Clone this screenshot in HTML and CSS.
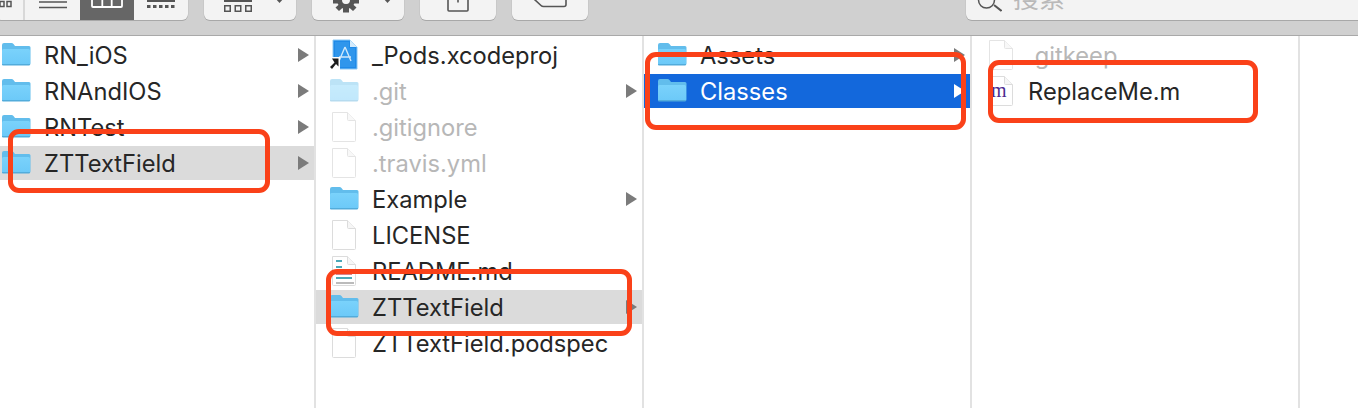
FILE: index.html
```html
<!DOCTYPE html>
<html lang="zh">
<head>
<meta charset="utf-8">
<title>Finder</title>
<link rel="stylesheet" href="styles.css">
</head>
<body>
<svg class="defs" width="0" height="0" aria-hidden="true">
  <defs>
    <linearGradient id="fg" x1="0" y1="0" x2="0" y2="1"><stop offset="0" stop-color="#7ad2fb"/><stop offset="1" stop-color="#6cc9f8"/></linearGradient>
    <symbol id="folder" viewBox="0 0 30 26">
      <path d="M1 21.500V3q0-2 2-2h7.500q1.200 0 2 1l1.500 2h14q1.500 0 1.500 1.500V21.500q0 1.500-1.500 1.500H2.500Q1 23 1 21.500z" fill="#62bdec"/>
      <path d="M1 8.500q0-1.500 1.500-1.500h25q1.500 0 1.500 1.500v13q0 1-1 1H2q-1 0-1-1z" fill="url(#fg)"/>
      <path d="M1 22h28v.5q0 1-1 1H2q-1 0-1-1z" fill="#52acdb"/>
    </symbol>
    <symbol id="file" viewBox="0 0 26 32">
      <path d="M1.500 1.500h15l8 8v20q0 1-1 1h-21q-1 0-1-1z" fill="#fff" stroke="#dcdcdc"/>
      <path d="M16.500 1.500v7q0 1 1 1h7" fill="#f6f6f6" stroke="#dcdcdc"/>
    </symbol>
  </defs>
</svg>
<header class="toolbar">
  <div class="seg seg-view">
    <span class="seg-cell cell-icons"><svg width="16" height="12" viewBox="0 0 16 12"><g fill="none" stroke="#555" stroke-width="1.500"><rect x="1" y="2.500" width="4" height="5"/><rect x="8" y="2.500" width="4" height="5"/></g></svg></span>
    <span class="seg-cell cell-list"><svg width="28" height="12" viewBox="0 0 28 12"><path d="M0 3h28M0 8.500h28" stroke="#555" stroke-width="1.500"/></svg></span>
    <span class="seg-cell cell-col"><svg width="32" height="12" viewBox="0 0 32 12"><path d="M1 0v7q0 1 1 1h28q1 0 1-1V0M11.300 0v8M20.700 0v8" fill="none" stroke="#fff" stroke-width="1.800"/></svg></span>
    <span class="seg-cell cell-flow"><svg width="28" height="12" viewBox="0 0 28 12"><path d="M0 2h28" stroke="#555" stroke-width="2"/><path d="M0 6h3.500v3H0zM6 6h3.500v3H6zM12 6h3.500v3H12zM18 6h3.500v3H18zM24 6h3.500v3H24z" fill="#555"/></svg></span>
  </div>
  <div class="btn btn-drop">
    <svg width="30" height="16" viewBox="0 0 30 16"><path d="M0 1h28" stroke="#555" stroke-width="2"/><g fill="none" stroke="#555" stroke-width="1.500"><rect x=".75" y="5.750" width="5.500" height="5.500"/><rect x="11.250" y="5.750" width="5.500" height="5.500"/><rect x="21.750" y="5.750" width="5.500" height="5.500"/></g></svg>
    <svg class="caret" width="9" height="5" viewBox="0 0 9 5"><path d="M0 0h9L4.500 5z" fill="#555"/></svg>
  </div>
  <div class="btn btn-drop">
    <svg width="30" height="16" viewBox="0 0 30 16"><path d="M14 -9a9 9 0 1 0 .01 0zM14 -4a4 4 0 1 1-.01 0z" fill="#555" fill-rule="evenodd"/><path d="M1 0h26v3.500H1zM11 6h6v6.500h-6zM3.500 7.500l4-3.500 4 3-4.500 4zM24.500 7.500l-4-3.500-4 3 4.500 4z" fill="#555"/><circle cx="14" cy="0" r="4" fill="#f3f3f3"/></svg>
    <svg class="caret" width="9" height="5" viewBox="0 0 9 5"><path d="M0 0h9L4.500 5z" fill="#555"/></svg>
  </div>
  <div class="btn btn-plain">
    <svg width="22" height="16" viewBox="0 0 22 16"><path d="M1 -1V10q0 1 1 1h18q1 0 1-1V-1M11 0v2.500" fill="none" stroke="#555" stroke-width="1.600"/></svg>
  </div>
  <div class="btn btn-plain">
    <svg width="34" height="16" viewBox="0 0 34 16"><path d="M1 -1l7 6.500q1 1 2.500 1H31q2 0 2-2V-1" fill="none" stroke="#555" stroke-width="1.600"/></svg>
  </div>
  <div class="search">
    <svg class="glass" width="30" height="14" viewBox="0 0 30 14"><circle cx="14.500" cy="0" r="8" fill="none" stroke="#555" stroke-width="1.500"/><path d="M22 5l7.500 6" stroke="#555" stroke-width="2"/></svg>
    <span class="search-text">搜索</span>
  </div>
</header>
<main class="browser">
  <section class="col col-1">
    <div class="row"><svg class="ic-folder"><use href="#folder"/></svg><span class="name">RN_iOS</span><i class="arrow"></i></div>
    <div class="row"><svg class="ic-folder"><use href="#folder"/></svg><span class="name">RNAndIOS</span><i class="arrow"></i></div>
    <div class="row"><svg class="ic-folder"><use href="#folder"/></svg><span class="name">RNTest</span><i class="arrow"></i></div>
    <div class="row sel"><svg class="ic-folder"><use href="#folder"/></svg><span class="name">ZTTextField</span><i class="arrow"></i></div>
  </section>
  <section class="col col-2">
    <div class="row">
      <svg class="ic-xcode" viewBox="0 0 30 32"><path d="M4 1h17l7 7v22H4z" fill="#1f8ae8" stroke="#8cc8f4"/><path d="M6 3h14v6h6v19H6z" fill="#2f96ec"/><path d="M21 1v7h7z" fill="#d4ebfc"/><path d="M16 8l6 14M16 8l-6 14M10 18h12" stroke="#cfe8fb" stroke-width="1.400" fill="none"/><path d="M1 18h10v13H1z" fill="#fff"/><path d="M9.500 19.500v8l-2.500-2.500-4 5-2-2 4.500-4.500-2.500-4z" fill="#1c1c1c"/></svg>
      <span class="name">_Pods.xcodeproj</span>
    </div>
    <div class="row dim"><svg class="ic-folder"><use href="#folder"/></svg><span class="name">.git</span><i class="arrow"></i></div>
    <div class="row dim"><svg class="ic-file"><use href="#file"/></svg><span class="name">.gitignore</span></div>
    <div class="row dim"><svg class="ic-file"><use href="#file"/></svg><span class="name">.travis.yml</span></div>
    <div class="row"><svg class="ic-folder"><use href="#folder"/></svg><span class="name">Example</span><i class="arrow"></i></div>
    <div class="row"><svg class="ic-file"><use href="#file"/></svg><span class="name">LICENSE</span></div>
    <div class="row">
      <svg class="ic-file" viewBox="0 0 26 32"><use href="#file" width="26" height="32"/><path d="M5 6h6M5 12h6" stroke="#4aa8b8" stroke-width="2"/><path d="M5 16h16v4H5z" fill="#d9838c"/><path d="M5 23h16" stroke="#4aa8b8" stroke-width="2"/><path d="M5 28h18" stroke="#bbb" stroke-width="2"/></svg>
      <span class="name">README.md</span>
    </div>
    <div class="row sel"><svg class="ic-folder"><use href="#folder"/></svg><span class="name">ZTTextField</span><i class="arrow"></i></div>
    <div class="row"><svg class="ic-file"><use href="#file"/></svg><span class="name">ZTTextField.podspec</span></div>
  </section>
  <section class="col col-3">
    <div class="row"><svg class="ic-folder"><use href="#folder"/></svg><span class="name">Assets</span><i class="arrow"></i></div>
    <div class="row active"><svg class="ic-folder"><use href="#folder"/></svg><span class="name">Classes</span><i class="arrow"></i></div>
  </section>
  <section class="col col-4">
    <div class="row dim"><svg class="ic-file"><use href="#file"/></svg><span class="name">.gitkeep</span></div>
    <div class="row">
      <svg class="ic-file" viewBox="0 0 26 32"><use href="#file" width="26" height="32"/></svg>
      <span class="m-badge">m</span>
      <span class="name">ReplaceMe.m</span>
    </div>
  </section>
  <section class="col col-5"></section>
</main>
<div class="mark mark-a"></div>
<div class="mark mark-b"></div>
<div class="mark mark-c"></div>
<div class="mark mark-d"></div>
</body>
</html>
```
FILE: styles.css
```css
* { box-sizing: border-box; }
html, body { margin: 0; height: 100%; }
body {
  position: relative;
  width: 1358px;
  height: 408px;
  overflow: hidden;
  background: #fff;
  font-family: Inter, "Noto Sans CJK SC", sans-serif;
  color: #262626;
}
.defs { position: absolute; }

.toolbar {
  height: 36px;
  background: #d0d0d0;
  border-bottom: 1px solid #a9a9a9;
  display: flex;
  align-items: flex-start;
  margin-left: -4px;
}
.seg, .btn, .search {
  height: 20px;
  background: #f3f3f3;
  border-radius: 0 0 6px 6px;
  box-shadow: 0 1px 0 #a8a8a8, 0 0 0 .5px #c0c0c0;
  overflow: hidden;
}
.seg { display: flex; width: 192px; margin-right: 16px; }
.seg-cell { display: flex; align-items: flex-end; justify-content: center; padding-bottom: 9px; }
.seg-cell svg { flex: none; }
.cell-icons { width: 29px; border-right: 2px solid #d8d8d8; padding-right: 6px; }
.cell-list { width: 55px; }
.cell-col { width: 54px; background: #666; }
.cell-flow { width: 54px; }
.btn { display: flex; align-items: flex-end; }
.btn svg { display: block; flex: none; }
.btn-drop { width: 92px; margin-right: 16px; padding: 0 0 4px 20px; gap: 21px; }
.btn-drop .caret { align-self: flex-start; margin-top: -2px; }
.btn-plain { width: 76px; margin-right: 16px; padding: 0 0 4px 27px; }
.btn-plain:nth-of-type(5) { padding-left: 21px; }
.search {
  position: absolute;
  left: 966px;
  top: 0;
  width: 392px;
  display: flex;
  align-items: flex-end;
  gap: 11px;
  padding-left: 6px;
  border-radius: 0 0 0 6px;
}
.glass { align-self: flex-start; flex: none; }
.search-text { font-size: 26px; line-height: 26px; color: #b9b9b9; margin-bottom: 8px; flex: none; }

.browser { display: flex; height: 372px; }
.col {
  padding-top: 2px;
  display: flex;
  flex-direction: column;
  gap: 2px;
  border-right: 2px solid #e2e2e2;
  flex: none;
}
.col-1 { width: 316px; }
.col-2 { width: 328px; }
.col-3 { width: 328px; }
.col-4 { width: 328px; }
.col-5 { flex: 1; border-right: 0; }

.row {
  position: relative;
  flex: none;
  height: 34px;
  display: flex;
  align-items: center;
  font-size: 23.7px;
  line-height: 34px;
  white-space: nowrap;
  overflow: hidden;
}
.col-2 .row, .col-3 .row { padding-left: 13px; }
.col-4 .row { padding-left: 14px; }
.ic-folder { flex: none; width: 30px; height: 26px; margin-right: 13px; }
.col-1 .ic-folder { margin-left: 1px; }
.ic-file { flex: none; width: 26px; height: 32px; margin: 0 15px 0 2px; }
.ic-xcode { flex: none; width: 30px; height: 32px; margin-right: 13px; }
.col-4 .ic-file { margin-right: 14px; }
.name { flex: none; padding-top: 2px; }
.arrow {
  position: absolute;
  right: 5px;
  top: 10px;
  width: 0;
  height: 0;
  border-left: 11px solid #7b7b7b;
  border-top: 7px solid transparent;
  border-bottom: 7px solid transparent;
}
.sel { background: #dbdbdb; }
.active { background: #1368dc; color: #fff; }
.active .arrow { border-left-color: #fff; }
.dim { color: #b7b7b7; }
.dim .ic-folder { opacity: .42; }
.dim .ic-file { opacity: .75; }
.m-badge {
  position: absolute;
  left: 19px;
  top: 5px;
  font: 20px/22px "Liberation Serif", serif;
  color: #4b2a90;
}

.mark {
  position: absolute;
  border: 5px solid #fa4119;
  border-radius: 11px;
}
.mark-a { left: 8px; top: 129px; width: 262px; height: 64px; }
.mark-b { left: 326px; top: 269px; width: 306px; height: 67px; }
.mark-c { left: 645px; top: 52px; width: 321px; height: 78px; }
.mark-d { left: 988px; top: 60px; width: 270px; height: 63px; }
```
